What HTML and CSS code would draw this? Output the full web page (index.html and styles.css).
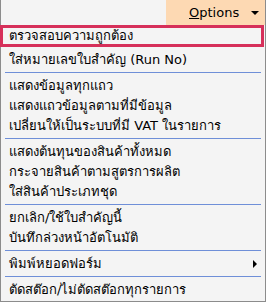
FILE: index.html
```html
<!DOCTYPE html>
<html>
<head>
<meta charset="utf-8">
<link rel="stylesheet" href="styles.css">
</head>
<body>
<div class="menu">
  <div class="top">
    <div class="spacer"></div>
    <div class="options"><span class="label"><u>O</u>ptions</span><span class="caret"></span></div>
  </div>
  <div class="list">
    <div class="item active">ตรวจสอบความถูกต้อง</div>
    <div class="item second">ใส่หมายเลขใบสำคัญ (Run No)</div>
    <div class="sep"></div>
    <div class="item">แสดงข้อมูลทุกแถว</div>
    <div class="item">แสดงแถวข้อมูลตามที่มีข้อมูล</div>
    <div class="item">เปลี่ยนให้เป็นระบบที่มี VAT ในรายการ</div>
    <div class="sep"></div>
    <div class="item">แสดงต้นทุนของสินค้าทั้งหมด</div>
    <div class="item">กระจายสินค้าตามสูตรการผลิต</div>
    <div class="item">ใส่สินค้าประเภทชุด</div>
    <div class="sep"></div>
    <div class="item">ยกเลิก/ใช้ใบสำคัญนี้</div>
    <div class="item">บันทึกล่วงหน้าอัตโนมัติ</div>
    <div class="sep"></div>
    <div class="item sub">พิมพ์หยอดฟอร์ม<span class="arrow"></span></div>
    <div class="sep"></div>
    <div class="item">ตัดสต๊อก/ไม่ตัดสต๊อกทุกรายการ</div>
  </div>
</div>
</body>
</html>
```
FILE: styles.css
```css
html, body {
  margin: 0;
  padding: 0;
  background: #f4f4f4;
}
body {
  width: 266px;
  height: 302px;
  overflow: hidden;
  font-family: Tahoma, "DejaVu Sans", "Noto Sans", sans-serif;
  font-size: 13px;
  color: #000;
}
.menu {
  width: 266px;
  height: 302px;
  box-sizing: border-box;
  border-left: 1px solid #8c8c8c;
  border-right: 1px solid #8c8c8c;
  border-bottom: 1px solid #8c8c8c;
  display: flex;
  flex-direction: column;
}
.top {
  display: flex;
  height: 25px;
  flex: none;
}
.spacer {
  flex: 1;
}
.options {
  width: 99px;
  background: #fdd9b3;
  display: flex;
  align-items: center;
  position: relative;
}
.options .label {
  margin-left: 23px;
  font-size: 13px;
}
.options .caret {
  position: absolute;
  right: 6px;
  top: 11px;
  width: 0;
  height: 0;
  border-left: 4px solid transparent;
  border-right: 4px solid transparent;
  border-top: 4px solid #000;
}
.list {
  display: flex;
  flex-direction: column;
}
.item {
  height: 20px;
  line-height: 20px;
  padding-left: 8px;
  white-space: nowrap;
  position: relative;
  flex: none;
}
.item.active {
  height: 16px;
  line-height: 16px;
  border: 3px solid #d6305a;
  margin-left: -1px;
  padding-left: 6px;
  margin-right: 1px;
}
.item.second {
  margin-top: 3px;
}
.sep {
  height: 1px;
  flex: none;
  background: #6f8fd8;
  margin: 2px 4px 3px 4px;
}
.arrow {
  position: absolute;
  right: 8px;
  top: 6px;
  width: 0;
  height: 0;
  border-top: 4px solid transparent;
  border-bottom: 4px solid transparent;
  border-left: 4px solid #000;
}
```
